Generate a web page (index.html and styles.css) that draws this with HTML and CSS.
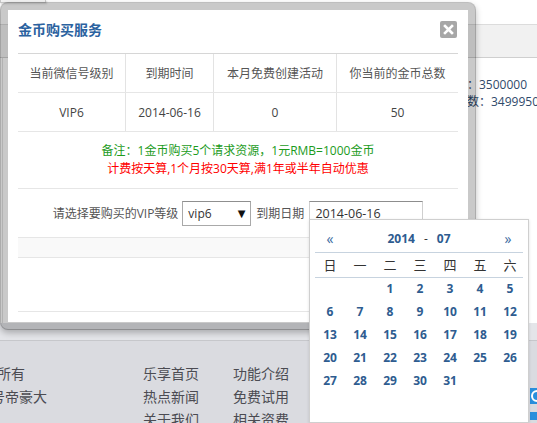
FILE: index.html
```html
<!DOCTYPE html>
<html lang="zh-CN">
<head>
<meta charset="utf-8">
<title>金币购买服务</title>
<link rel="stylesheet" href="styles.css">
</head>
<body>
<div class="page">
  <div class="topbox"></div>
  <div class="bar"></div>
  <div class="stats">
    <div class="stat-line l1">总金币数：3500000</div>
    <div class="stat-line l2">消费后总数：3499950</div>
  </div>
  <div class="footer">
    <div class="foot-band"></div>
    <div class="foot-links">
      <div class="fcol c1">
        <div>乐享版权所有</div>
        <div>地址：8号帝豪大</div>
      </div>
      <div class="fcol c2">
        <div>乐享首页</div>
        <div>热点新闻</div>
        <div>关于我们</div>
      </div>
      <div class="fcol c3">
        <div>功能介绍</div>
        <div>免费试用</div>
        <div>相关资费</div>
      </div>
    </div>
  </div>
</div>

<div class="qq-widget">
  <div class="qq-a"><span class="qq-ring"></span></div>
  <div class="qq-b"></div>
</div>

<div class="modal">
  <div class="mhead">
    <div class="mtitle">金币购买服务</div>
    <div class="mclose">
      <svg width="17" height="17" viewBox="0 0 17 17"><path d="M5 5 L12 12 M12 5 L5 12" stroke="#fff" stroke-width="2.6" stroke-linecap="square"/></svg>
    </div>
  </div>
  <div class="mtable">
    <div class="row grid4 hrow">
      <div class="cell">当前微信号级别</div>
      <div class="cell">到期时间</div>
      <div class="cell">本月免费创建活动</div>
      <div class="cell">你当前的金币总数</div>
    </div>
    <div class="row grid4 drow">
      <div class="cell">VIP6</div>
      <div class="cell">2014-06-16</div>
      <div class="cell">0</div>
      <div class="cell">50</div>
    </div>
    <div class="row notes">
      <div class="green">备注：1金币购买5个请求资源，1元RMB=1000金币</div>
      <div class="red">计费按天算,1个月按30天算,满1年或半年自动优惠</div>
    </div>
    <div class="row formrow">
      <span class="flabel">请选择要购买的VIP等级</span>
      <div class="fselect"><span>vip6</span><span class="arrow">▼</span></div>
      <span class="flabel2">到期日期</span>
      <div class="finput">2014-06-16</div>
    </div>
    <div class="row striped"></div>
    <div class="row empty"></div>
  </div>
</div>

<div class="calendar">
  <div class="cal-head">
    <span class="nav">«</span>
    <span class="ym"><b>2014</b><span class="dash">-</span><b>07</b></span>
    <span class="nav">»</span>
  </div>
  <div class="cal-week">
    <span>日</span><span>一</span><span>二</span><span>三</span><span>四</span><span>五</span><span>六</span>
  </div>
  <div class="cal-days">
    <span></span><span></span><span>1</span><span>2</span><span>3</span><span>4</span><span>5</span>
    <span>6</span><span>7</span><span>8</span><span>9</span><span>10</span><span>11</span><span>12</span>
    <span>13</span><span>14</span><span>15</span><span>16</span><span>17</span><span>18</span><span>19</span>
    <span>20</span><span>21</span><span>22</span><span>23</span><span>24</span><span>25</span><span>26</span>
    <span>27</span><span>28</span><span>29</span><span>30</span><span>31</span><span></span><span></span>
  </div>
</div>
</body>
</html>
```

FILE: styles.css
```css
html, body {
  margin: 0;
  padding: 0;
}
body {
  width: 537px;
  height: 423px;
  overflow: hidden;
  position: relative;
  background: #fff;
  font-family: "Open Sans", "Noto Sans CJK SC", sans-serif;
  font-size: 12px;
  color: #555;
}

/* background page */
.page {
  width: 537px;
}
.topbox {
  width: 44px;
  height: 2px;
  background: #f3f3f3;
  border: 1px solid #c8c8c8;
  border-top: none;
  box-shadow: 1px 1px 2px rgba(0,0,0,0.15);
}
.bar {
  margin-top: 21px;
  height: 32px;
  background: #f1f1f1;
  border-top: 1px solid #dcdcdc;
  border-bottom: 1px solid #cfcfcf;
}
.stats {
  height: 247px;
  padding-top: 18px;
  padding-left: 418px;
  line-height: 17px;
  color: #2f4a6b;
  white-space: nowrap;
  overflow: hidden;
  border-left: 1px solid #e2e2e2;
  margin-left: 2px;
}
.stat-line.l1 { margin-left: -2px; }
.stat-line.l2 { margin-left: -2px; }

.footer {
  background: #dadbe0;
}
.foot-band {
  height: 17px;
  background: #e4e5e9;
  border-bottom: 1px solid #c6c7cb;
}
.foot-links {
  display: flex;
  padding-top: 21px;
  font-size: 14px;
  line-height: 23px;
  color: #4b4b52;
  white-space: nowrap;
}
.fcol.c1 { margin-left: -59px; width: 202px; }
.fcol.c2 { width: 90px; }

.qq-widget {
  position: absolute;
  right: 0;
  top: 388px;
  width: 7px;
}
.qq-a {
  height: 16px;
  background: #2a8fdc;
  overflow: hidden;
  position: relative;
}
.qq-ring {
  display: block;
  width: 8px;
  height: 8px;
  border: 2px solid #fff;
  border-radius: 50%;
  margin: 2px 0 0 1px;
}
.qq-b {
  margin-top: 8px;
  height: 8px;
  background: #2a8fdc;
}

/* modal */
.modal {
  position: absolute;
  left: 0;
  top: 2px;
  width: 460px;
  height: 312px;
  background: #fff;
  background-clip: padding-box;
  border: 8px solid rgba(0,0,0,0.21);
  border-radius: 8px;
  box-shadow: 0 3px 6px rgba(0,0,0,0.25);
}
.mhead {
  height: 43px;
  display: flex;
  justify-content: space-between;
  align-items: flex-start;
  padding: 0 11px 0 10px;
}
.mtitle {
  line-height: 40px;
  font-size: 14px;
  font-weight: bold;
  color: #2b62a0;
}
.mclose {
  width: 17px;
  height: 17px;
  margin-top: 11px;
  background: #a7a7a7;
  border-radius: 2px;
}
.mclose svg { display: block; }

.mtable {
  margin: 0 10px;
  width: 440px;
  border-top: 1px solid #d6d6d6;
}
.row {
  border-bottom: 1px solid #e6e6e6;
}
.grid4 {
  display: grid;
  grid-template-columns: 107px 88px 123px 122px;
  height: 38px;
}
.cell {
  display: flex;
  align-items: center;
  justify-content: center;
  color: #555;
}
.cell + .cell {
  border-left: 1px solid #e3e3e3;
}
.drow .cell { color: #444; }

.notes {
  height: 46px;
  padding-top: 10px;
  line-height: 18px;
  text-align: center;
}
.green { color: #1c9b1c; }
.red { color: #ff0000; }

.formrow {
  height: 48px;
  display: flex;
  align-items: center;
  justify-content: center;
  color: #555;
}
.fselect {
  width: 57px;
  height: 23px;
  margin-left: 4px;
  padding: 0 5px 0 5px;
  border: 1px solid #a9a9a9;
  border-top-color: #8f8f8f;
  display: flex;
  align-items: center;
  justify-content: space-between;
  color: #333;
  font-size: 12px;
}
.arrow {
  font-size: 10px;
  color: #111;
  font-family: "DejaVu Sans", sans-serif;
}
.flabel2 { margin-left: 5px; }
.finput {
  width: 107px;
  height: 23px;
  margin-left: 5px;
  padding-left: 5px;
  border: 1px solid #cfcfcf;
  border-top-color: #8d8d8d;
  line-height: 23px;
  color: #333;
  font-size: 12.5px;
}
.striped {
  height: 19px;
  background: #f9f9f9;
}
.empty {
  height: 53px;
}

/* calendar */
.calendar {
  position: absolute;
  left: 309px;
  top: 219px;
  width: 220px;
  height: 204px;
  box-sizing: border-box;
  border: 1px solid #cfcfcf;
  background: #fff;
  padding: 0 5px;
  box-shadow: 0 1px 3px rgba(0,0,0,0.12);
}
.cal-head {
  display: grid;
  grid-template-columns: 30px 1fr 30px;
  padding-top: 8px;
  padding-bottom: 2px;
  line-height: 22px;
  border-bottom: 1px solid #c7d3df;
  text-align: center;
  color: #2d5b8f;
}
.nav {
  font-size: 14px;
  color: #3a69a0;
}
.ym b {
  font-size: 12px;
  font-weight: bold;
}
.dash {
  margin: 0 9px;
  color: #333;
}
.cal-week {
  display: grid;
  grid-template-columns: repeat(7, 30px);
  height: 24px;
  line-height: 24px;
  border-bottom: 1px solid #c7d3df;
  text-align: center;
  color: #333;
  font-size: 13px;
}
.cal-days {
  display: grid;
  grid-template-columns: repeat(7, 30px);
  grid-auto-rows: 21px;
  row-gap: 2px;
  line-height: 21px;
  text-align: center;
  font-weight: bold;
  color: #2e5c90;
  font-size: 12px;
}
```
